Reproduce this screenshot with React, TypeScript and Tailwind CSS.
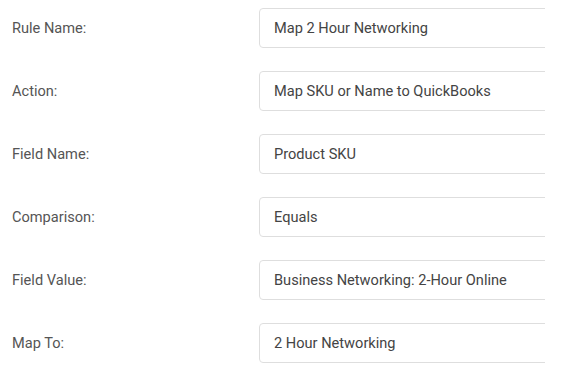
import React from "react";

const rows = [
  ["Rule Name:", "Map 2 Hour Networking"],
  ["Action:", "Map SKU or Name to QuickBooks"],
  ["Field Name:", "Product SKU"],
  ["Comparison:", "Equals"],
  ["Field Value:", "Business Networking: 2-Hour Online"],
  ["Map To:", "2 Hour Networking"],
];

export default function App() {
  return (
    <div
      className="w-[568px] h-[368px] bg-white pt-2 flex flex-col gap-[23px] overflow-hidden"
      style={{ fontFamily: "Roboto, 'Liberation Sans', sans-serif" }}
    >
      {rows.map(([label, value]) => (
        <div key={label} className="flex items-center h-[40px]">
          <div className="w-[259px] pl-3 pt-[2px] text-[14.6px] text-[#555]">{label}</div>
          <div className="w-[286px] h-[40px] overflow-hidden">
            <div className="w-[320px] h-[40px] border border-[#dedede] rounded-[4px] flex items-center pl-[14px] pt-[2px] text-[14.6px] text-[#444]">
              {value}
            </div>
          </div>
        </div>
      ))}
    </div>
  );
}
